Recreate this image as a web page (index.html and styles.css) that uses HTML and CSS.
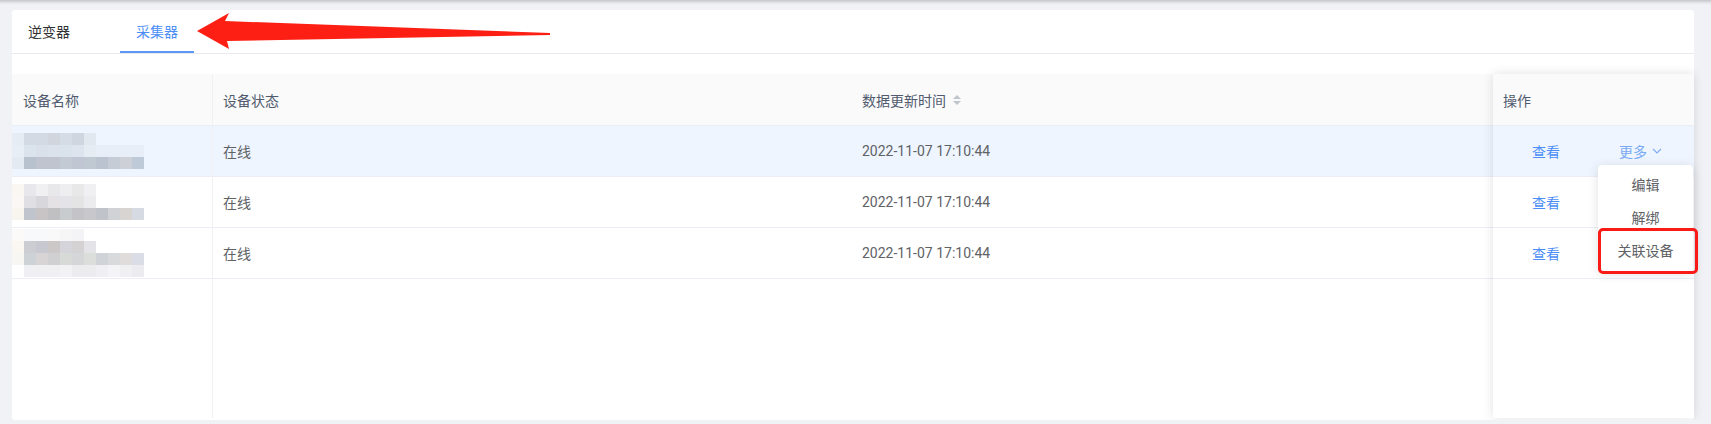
FILE: index.html
```html
<!DOCTYPE html>
<html lang="zh-CN">
<head>
  <meta charset="UTF-8">
  <meta name="viewport" content="width=device-width, initial-scale=1.0">
  <title>设备列表</title>
  <link rel="stylesheet" href="styles.css">
</head>
<body>
  <div class="page">
    <div class="card">
      <div class="tabs">
        <div class="tab">逆变器</div>
        <div class="tab active">采集器</div>
      </div>

      <!-- annotation arrow -->
      <svg class="arrow" width="560" height="50" viewBox="0 0 560 50">
        <polygon points="185,21 217,3 213,11 538,23 538,25 215,31 217,39" fill="#fe1f14" />
      </svg>

      <div class="table">
        <div class="table-main">
          <div class="row head">
            <div class="cell name">设备名称</div>
            <div class="cell status">设备状态</div>
            <div class="cell time">数据更新时间
              <svg class="sort" width="8" height="10" viewBox="0 0 8 10">
                <polygon points="4,0 8,4 0,4" fill="#c0c4cc" />
                <polygon points="0,6 8,6 4,10" fill="#c0c4cc" />
              </svg>
            </div>
          </div>
          <div class="row hover">
            <div class="cell name"><div class="mosaic" data-set="0"></div></div>
            <div class="cell status">在线</div>
            <div class="cell time">2022-11-07 17:10:44</div>
          </div>
          <div class="row">
            <div class="cell name"><div class="mosaic" data-set="1"></div></div>
            <div class="cell status">在线</div>
            <div class="cell time">2022-11-07 17:10:44</div>
          </div>
          <div class="row">
            <div class="cell name"><div class="mosaic" data-set="2"></div></div>
            <div class="cell status">在线</div>
            <div class="cell time">2022-11-07 17:10:44</div>
          </div>
          <div class="row filler">
            <div class="cell name"></div>
          </div>
        </div>

        <div class="table-fixed">
          <div class="row head"><div class="cell">操作</div></div>
          <div class="row hover">
            <div class="cell ops">
              <a class="link">查看</a>
              <a class="link more">更多
                <svg width="10" height="6" viewBox="0 0 10 6"><polyline points="1,1 5,5 9,1" fill="none" stroke="#7aaaf6" stroke-width="1.1" /></svg>
              </a>
            </div>
          </div>
          <div class="row">
            <div class="cell ops"><a class="link">查看</a></div>
          </div>
          <div class="row">
            <div class="cell ops"><a class="link">查看</a></div>
          </div>

          <!-- dropdown menu of 更多 -->
          <ul class="dropdown">
            <li>编辑</li>
            <li>解绑</li>
            <li>关联设备</li>
          </ul>
          <div class="mark"></div>
        </div>
      </div>
    </div>
  </div>

  <script>
    // pixelated device names
    const mosaics = [
      [
        ['#e6ecf4', '#d4dae4', '#d4dae4', '#d0d5de', '#d6dce6', '#d0d6df', '#e2e8f0'],
        ['#e8eef6', '#dbe3ec', '#dae0ea', '#dce2ec', '#dae2ec', '#dde4ee', '#e6ecf4', '#e8eef7', '#e8eef7', '#e8eef7', '#e8eef7'],
        ['#e4eaf2', '#b8c2ce', '#c0c4cf', '#c0c4ce', '#c4cad3', '#c0c7d2', '#c0c8d2', '#bcc3d0', '#c6ccd6', '#cdd0d7', '#bfcad8']
      ],
      [
        ['#faf6f2', '#e8e8ec', '#f0f0f2', '#e8e8ea', '#eeeef0', '#e8e8e8', '#f0f0f2'],
        ['#faf7f4', '#e0e0e4', '#d8d8dc', '#e4e2e4', '#e4e4e8', '#e4e4e4', '#ececee'],
        ['#f8f4ee', '#c0c4cc', '#c8c4c6', '#c0c0c2', '#c8ccce', '#c4c4c8', '#c8c8cc', '#c0c4ca', '#d0d2d6', '#d8d4d2', '#d6dae2']
      ],
      [
        ['#fbfaf8', '#f8f9fa', '#f8f9fa', '#f9f9f9', '#f6f6f6', '#f4f4f6'],
        ['#faf6f2', '#cccdd2', '#c8c8d0', '#ccc8c8', '#d4d4da', '#d4d2d2', '#e4e4e8'],
        ['#f8f6f2', '#ccd2d6', '#d8d4d6', '#d0d0d2', '#d8dad8', '#d4d6d8', '#dcdedc', '#d0d4d8', '#d8dadc', '#e0dcdc', '#dadde6'],
        ['#ffffff', '#f0f0f2', '#f0f0f2', '#f0f0f2', '#f2f2f4', '#ececee', '#ececee', '#f0f0f2', '#f4f4f6', '#f0f0f2', '#ececf0']
      ]
    ];

    document.querySelectorAll('.mosaic').forEach(box => {
      const rows = mosaics[box.dataset.set];
      rows.forEach(line => {
        for (let i = 0; i < 11; i++) {
          const px = document.createElement('span');
          if (line[i]) px.style.background = line[i];
          box.appendChild(px);
        }
      });
    });
  </script>
</body>
</html>
```

FILE: styles.css
```css
/* Global */
body {
  margin: 0;
  font-family: Roboto, "Noto Sans CJK SC", sans-serif;
  font-size: 14px;
  color: #606266;
  background: linear-gradient(#c4c6cb 0, #e6e8ec 3px, #f0f2f5 5px) no-repeat, #f0f2f5;
  overflow: hidden;
}

.page {
  padding: 10px 17px 0 12px;
}

.card {
  position: relative;
  height: 410px;
  box-sizing: border-box;
  padding-bottom: 2px;
  background: #ffffff;
  border-radius: 3px;
}

/* Tabs */
.tabs {
  display: flex;
  height: 44px;
  box-sizing: border-box;
  border-bottom: 1px solid #e8eaef;
}

.tab {
  width: 74px;
  margin-right: 34px;
  text-align: center;
  line-height: 44px;
  color: #303133;
}

.tab.active {
  color: #4b8ef7;
  box-shadow: inset 0 -2px 0 #5b97f6;
}

.arrow {
  position: absolute;
  left: 0;
  top: 0;
}

/* Table */
.table {
  display: flex;
  height: 344px;
  margin-top: 20px;
}

.table-main {
  flex: 1;
  display: flex;
  flex-direction: column;
}

.row {
  display: flex;
  height: 51px;
  box-sizing: border-box;
  border-bottom: 1px solid #ebeef5;
}

.row.head {
  height: 52px;
  background: #fafafa;
  color: #515a6e;
}

.row.hover {
  background: #eef5fe;
}

.row.filler {
  flex: 1;
  border-bottom: none;
}

.cell {
  display: flex;
  align-items: center;
  padding: 0 10px;
  box-sizing: border-box;
  white-space: nowrap;
}

.cell.name {
  width: 201px;
  padding-left: 11px;
  border-right: 1px solid #f0f1f4;
}

.cell.status {
  width: 639px;
}

.cell.time {
  flex: 1;
}

.sort {
  margin-left: 7px;
}

.mosaic {
  display: grid;
  grid-template-columns: repeat(11, 12px);
  grid-auto-rows: 12px;
  margin-left: -11px;
}

/* Fixed right column */
.table-fixed {
  position: relative;
  width: 201px;
  background: #ffffff;
  box-shadow: 0 0 10px rgba(0, 0, 0, 0.12);
}

.ops {
  width: 100%;
  padding-left: 39px;
}

.link {
  color: #4b8ef7;
  cursor: pointer;
}

.link.more {
  display: flex;
  align-items: center;
  gap: 5px;
  margin-left: 59px;
  color: #7aaaf6;
}

.dropdown {
  position: absolute;
  left: 105px;
  top: 91px;
  width: 95px;
  margin: 0;
  padding: 4px 0;
  list-style: none;
  background: #ffffff;
  border-radius: 4px;
  box-shadow: 0 2px 12px rgba(0, 0, 0, 0.12);
}

.dropdown li {
  line-height: 33px;
  text-align: center;
  color: #606266;
}

.mark {
  position: absolute;
  left: 105px;
  top: 154px;
  width: 100px;
  height: 46px;
  box-sizing: border-box;
  border: 3px solid #fa1a16;
  border-radius: 5px;
}
```
